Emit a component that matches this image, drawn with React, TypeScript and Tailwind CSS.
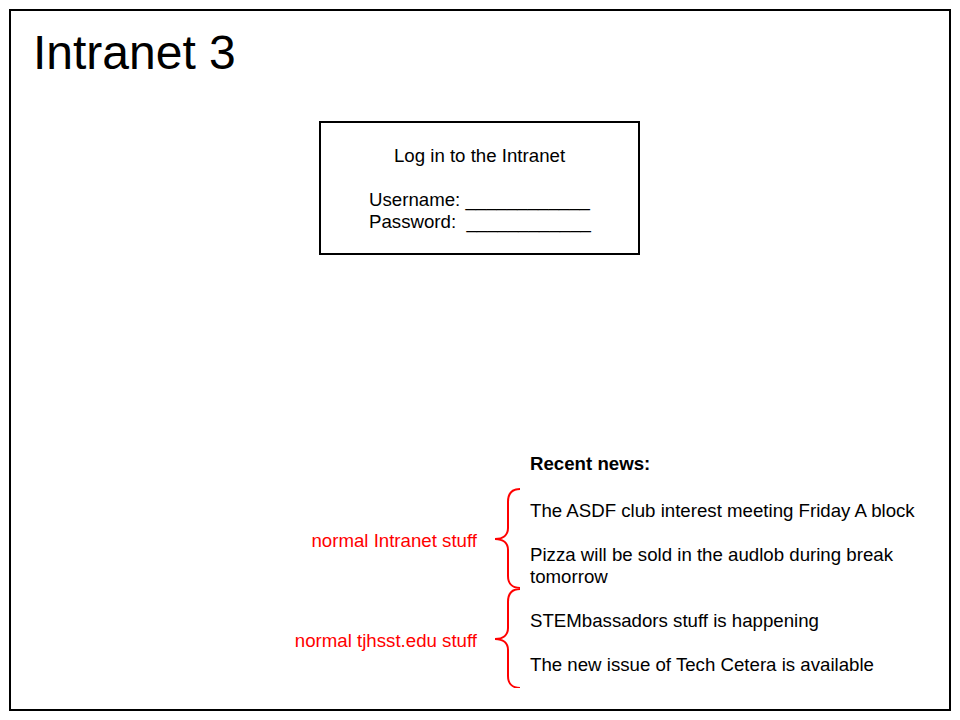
const news: { label: string; items: string[]; pad: string }[] = [
  {
    label: "normal Intranet stuff",
    items: [
      "The ASDF club interest meeting Friday A block",
      "Pizza will be sold in the audlob during break tomorrow",
    ],
    pad: "pt-[12px]",
  },
  {
    label: "normal tjhsst.edu stuff",
    items: [
      "STEMbassadors stuff is happening",
      "The new issue of Tech Cetera is available",
    ],
    pad: "pt-[22px]",
  },
]

function Brace() {
  return (
    <svg width="53" height="100" viewBox="0 0 53 100" className="shrink-0">
      <path
        d="M43 1 C35 1 31 6 31 14 L31 40 C31 47 26 51 18 51 C26 51 31 55 31 62 L31 88 C31 95 35 100 43 100"
        fill="none"
        stroke="#ff0000"
        strokeWidth="2"
      />
    </svg>
  )
}

export default function App() {
  return (
    <div className="w-[960px] h-[720px] bg-white p-[9px] font-['Liberation_Sans',Arial,sans-serif] text-black">
      <div className="h-full border-2 border-black flex flex-col pt-[18px]">
        {/* Title */}
        <h1 className="pl-[22px] text-[48px] leading-[48px]">Intranet 3</h1>

        {/* Login box */}
        <div className="ml-[308px] mt-[44px] w-[321px] h-[134px] border-2 border-black pt-[22px] text-[18.67px] leading-[22px]">
          <p className="text-center">Log in to the Intranet</p>
          <div className="mt-[22px] pl-[48px] whitespace-pre">
            <p>Username: ____________</p>
            <p>Password:  ____________</p>
          </div>
        </div>

        {/* News */}
        <div className="mt-[198px] text-[18.67px] leading-[22px]">
          <p className="pl-[519px] font-bold">Recent news:</p>
          <div className="mt-[13px] flex flex-col">
            {news.map((g) => (
              <div key={g.label} className="flex h-[100px]">
                <div className="w-[466px] flex items-center justify-end pt-[5px] text-[#ff0000]">
                  {g.label}
                </div>
                <Brace />
                <div className={`w-[400px] flex flex-col gap-[22px] ${g.pad}`}>
                  {g.items.map((t) => (
                    <p key={t}>{t}</p>
                  ))}
                </div>
              </div>
            ))}
          </div>
        </div>
      </div>
    </div>
  )
}
